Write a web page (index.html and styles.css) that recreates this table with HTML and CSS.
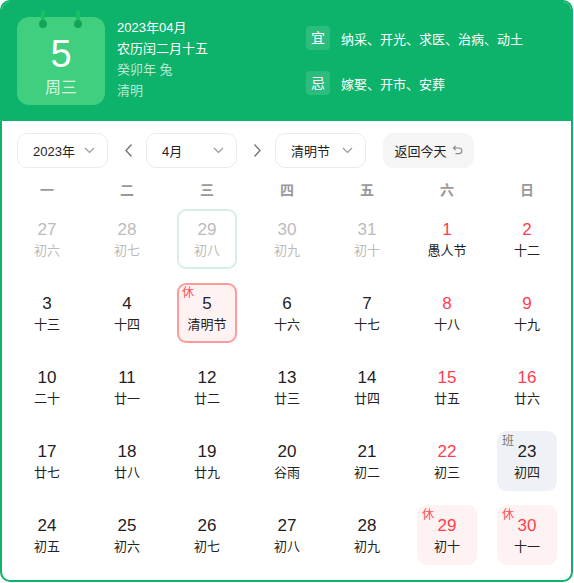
FILE: index.html
```html
<!DOCTYPE html>
<html lang="zh">
  <head>
    <meta charset="UTF-8" />
    <meta name="viewport" content="width=device-width, initial-scale=1.0" />
    <title>万年历</title>
    <link rel="stylesheet" href="styles.css">
  </head>
  <body>
    <div class="calendar">
      <header class="head">
        <div class="daycard">
          <span class="pin pin-l"></span>
          <span class="pin pin-r"></span>
          <div class="daynum">5</div>
          <div class="weekday">周三</div>
        </div>
        <div class="info">
          <p>2023年04月</p>
          <p>农历闰二月十五</p>
          <p class="soft">癸卯年 兔</p>
          <p class="soft">清明</p>
        </div>
        <div class="almanac">
          <div class="alm-row"><span class="badge">宜</span><span>纳采、开光、求医、治病、动土</span></div>
          <div class="alm-row"><span class="badge">忌</span><span>嫁娶、开市、安葬</span></div>
        </div>
      </header>

      <div class="toolbar">
        <div class="select">2023年<svg class="chev" width="11" height="7" viewBox="0 0 11 7"><path d="M1 1l4.5 4.5L10 1" fill="none" stroke="#999" stroke-width="1.2"/></svg></div>
        <div class="arrow"><svg width="9" height="15" viewBox="0 0 9 15"><path d="M7.5 1.5L2 7.5l5.5 6" fill="none" stroke="#777" stroke-width="1.4"/></svg></div>
        <div class="select">4月<svg class="chev" width="11" height="7" viewBox="0 0 11 7"><path d="M1 1l4.5 4.5L10 1" fill="none" stroke="#999" stroke-width="1.2"/></svg></div>
        <div class="arrow"><svg width="9" height="15" viewBox="0 0 9 15"><path d="M1.5 1.5L7 7.5l-5.5 6" fill="none" stroke="#777" stroke-width="1.4"/></svg></div>
        <div class="select">清明节<svg class="chev" width="11" height="7" viewBox="0 0 11 7"><path d="M1 1l4.5 4.5L10 1" fill="none" stroke="#999" stroke-width="1.2"/></svg></div>
        <div class="today-btn">返回今天<svg width="11" height="11" viewBox="0 0 11 11"><path d="M3.5 1L1.5 3l2 2M1.5 3H7a2.8 2.8 0 0 1 0 5.6H3.5" fill="none" stroke="#888" stroke-width="1.1"/></svg></div>
      </div>

      <div class="weekhead">
        <span>一</span><span>二</span><span>三</span><span>四</span><span>五</span><span>六</span><span>日</span>
      </div>

      <div class="grid">
        <div class="cell"><div class="box other"><b>27</b><i>初六</i></div></div>
        <div class="cell"><div class="box other"><b>28</b><i>初七</i></div></div>
        <div class="cell"><div class="box other today"><b>29</b><i>初八</i></div></div>
        <div class="cell"><div class="box other"><b>30</b><i>初九</i></div></div>
        <div class="cell"><div class="box other"><b>31</b><i>初十</i></div></div>
        <div class="cell"><div class="box wkend"><b>1</b><i>愚人节</i></div></div>
        <div class="cell"><div class="box wkend"><b>2</b><i>十二</i></div></div>

        <div class="cell"><div class="box"><b>3</b><i>十三</i></div></div>
        <div class="cell"><div class="box"><b>4</b><i>十四</i></div></div>
        <div class="cell"><div class="box selected"><em class="tag rest">休</em><b>5</b><i>清明节</i></div></div>
        <div class="cell"><div class="box"><b>6</b><i>十六</i></div></div>
        <div class="cell"><div class="box"><b>7</b><i>十七</i></div></div>
        <div class="cell"><div class="box wkend"><b>8</b><i>十八</i></div></div>
        <div class="cell"><div class="box wkend"><b>9</b><i>十九</i></div></div>

        <div class="cell"><div class="box"><b>10</b><i>二十</i></div></div>
        <div class="cell"><div class="box"><b>11</b><i>廿一</i></div></div>
        <div class="cell"><div class="box"><b>12</b><i>廿二</i></div></div>
        <div class="cell"><div class="box"><b>13</b><i>廿三</i></div></div>
        <div class="cell"><div class="box"><b>14</b><i>廿四</i></div></div>
        <div class="cell"><div class="box wkend"><b>15</b><i>廿五</i></div></div>
        <div class="cell"><div class="box wkend"><b>16</b><i>廿六</i></div></div>

        <div class="cell"><div class="box"><b>17</b><i>廿七</i></div></div>
        <div class="cell"><div class="box"><b>18</b><i>廿八</i></div></div>
        <div class="cell"><div class="box"><b>19</b><i>廿九</i></div></div>
        <div class="cell"><div class="box"><b>20</b><i>谷雨</i></div></div>
        <div class="cell"><div class="box"><b>21</b><i>初二</i></div></div>
        <div class="cell"><div class="box wkend"><b>22</b><i>初三</i></div></div>
        <div class="cell"><div class="box work"><em class="tag">班</em><b>23</b><i>初四</i></div></div>

        <div class="cell"><div class="box"><b>24</b><i>初五</i></div></div>
        <div class="cell"><div class="box"><b>25</b><i>初六</i></div></div>
        <div class="cell"><div class="box"><b>26</b><i>初七</i></div></div>
        <div class="cell"><div class="box"><b>27</b><i>初八</i></div></div>
        <div class="cell"><div class="box"><b>28</b><i>初九</i></div></div>
        <div class="cell"><div class="box wkend holiday"><em class="tag rest">休</em><b>29</b><i>初十</i></div></div>
        <div class="cell"><div class="box wkend holiday"><em class="tag rest">休</em><b>30</b><i>十一</i></div></div>
      </div>
    </div>
  </body>
</html>
```

FILE: styles.css
```css
body {
  margin: 0;
  font-family: "Liberation Sans", "Noto Sans CJK SC", sans-serif;
  color: #222;
}
.calendar {
  box-sizing: border-box;
  width: 573px;
  height: 582px;
  border: 2px solid #0db26b;
  border-radius: 10px;
  overflow: hidden;
  background: #fff;
}

/* entete verte */
.head {
  display: flex;
  height: 104px;
  padding: 15px 0 0 15px;
  background: #0db26b;
  color: #fff;
}
.daycard {
  position: relative;
  width: 88px;
  height: 88px;
  border-radius: 12px;
  background: #3fcf7e;
  text-align: center;
}
.pin {
  position: absolute;
  top: -7px;
  width: 4px;
  height: 15px;
  border-radius: 2px;
  background: #1bbf66;
}
.pin::after {
  content: '';
  position: absolute;
  left: -2px;
  bottom: -3px;
  width: 8px;
  height: 8px;
  border-radius: 50%;
  background: #12a55a;
}
.pin-l { left: 24px; }
.pin-r { left: 59px; }
.daynum {
  padding-top: 17px;
  font-size: 38px;
  line-height: 40px;
}
.weekday {
  margin-top: 4px;
  font-size: 16px;
  line-height: 20px;
  color: rgba(255, 255, 255, 0.8);
}
.info {
  width: 189px;
  margin-left: 12px;
}
.info p {
  margin: 0;
  font-size: 13px;
  line-height: 21px;
}
.info .soft {
  color: rgba(255, 255, 255, 0.72);
}
.almanac {
  display: flex;
  flex-direction: column;
  gap: 21px;
  padding-top: 9px;
}
.alm-row {
  display: flex;
  align-items: center;
  gap: 11px;
  font-size: 13px;
}
.badge {
  width: 24px;
  height: 24px;
  border-radius: 4px;
  background: rgba(255, 255, 255, 0.13);
  font-size: 14px;
  line-height: 24px;
  text-align: center;
}

/* barre d'outils */
.toolbar {
  display: flex;
  align-items: center;
  padding: 12px 0 0 15px;
  height: 35px;
}
.select {
  box-sizing: border-box;
  display: flex;
  align-items: center;
  justify-content: space-between;
  width: 91px;
  height: 35px;
  padding: 0 12px 0 15px;
  border: 1px solid #ebebeb;
  border-radius: 10px;
  font-size: 13px;
}
.arrow {
  display: flex;
  justify-content: center;
  width: 38px;
  padding-left: 2px;
  box-sizing: border-box;
}
.today-btn {
  display: flex;
  align-items: center;
  justify-content: center;
  gap: 5px;
  width: 91px;
  height: 35px;
  margin-left: 17px;
  border-radius: 10px;
  background: #f5f5f5;
  font-size: 13px;
}

/* grille */
.weekhead,
.grid {
  display: grid;
  grid-template-columns: repeat(7, 80px);
  padding-left: 5px;
}
.weekhead {
  height: 24px;
  padding-top: 10px;
  line-height: 24px;
  text-align: center;
  font-size: 14px;
  font-weight: bold;
  color: #999;
}
.grid {
  grid-auto-rows: 74px;
}
.cell {
  display: flex;
  justify-content: center;
  align-items: center;
}
.box {
  position: relative;
  box-sizing: border-box;
  width: 60px;
  height: 60px;
  padding-top: 11px;
  border-radius: 9px;
  text-align: center;
}
.box b {
  display: block;
  font-weight: normal;
  font-size: 17px;
  line-height: 20px;
}
.box i {
  display: block;
  font-style: normal;
  font-size: 13px;
  line-height: 21px;
}
.other b,
.other i {
  color: #bbb;
}
.wkend b {
  color: #ff3d4f;
}
.today {
  border: 2px solid #d6efe2;
  padding-top: 9px;
}
.selected {
  border: 2px solid #ff9b9b;
  background: #fff2f2;
  padding-top: 9px;
}
.holiday {
  background: #fff2f2;
}
.work {
  background: #eef2f6;
}
.tag {
  position: absolute;
  top: 3px;
  left: 5px;
  font-style: normal;
  font-size: 12px;
  line-height: 14px;
  color: #777;
}
.selected .tag {
  top: 1px;
  left: 3px;
}
.tag.rest {
  color: #ff4d5b;
}
```
